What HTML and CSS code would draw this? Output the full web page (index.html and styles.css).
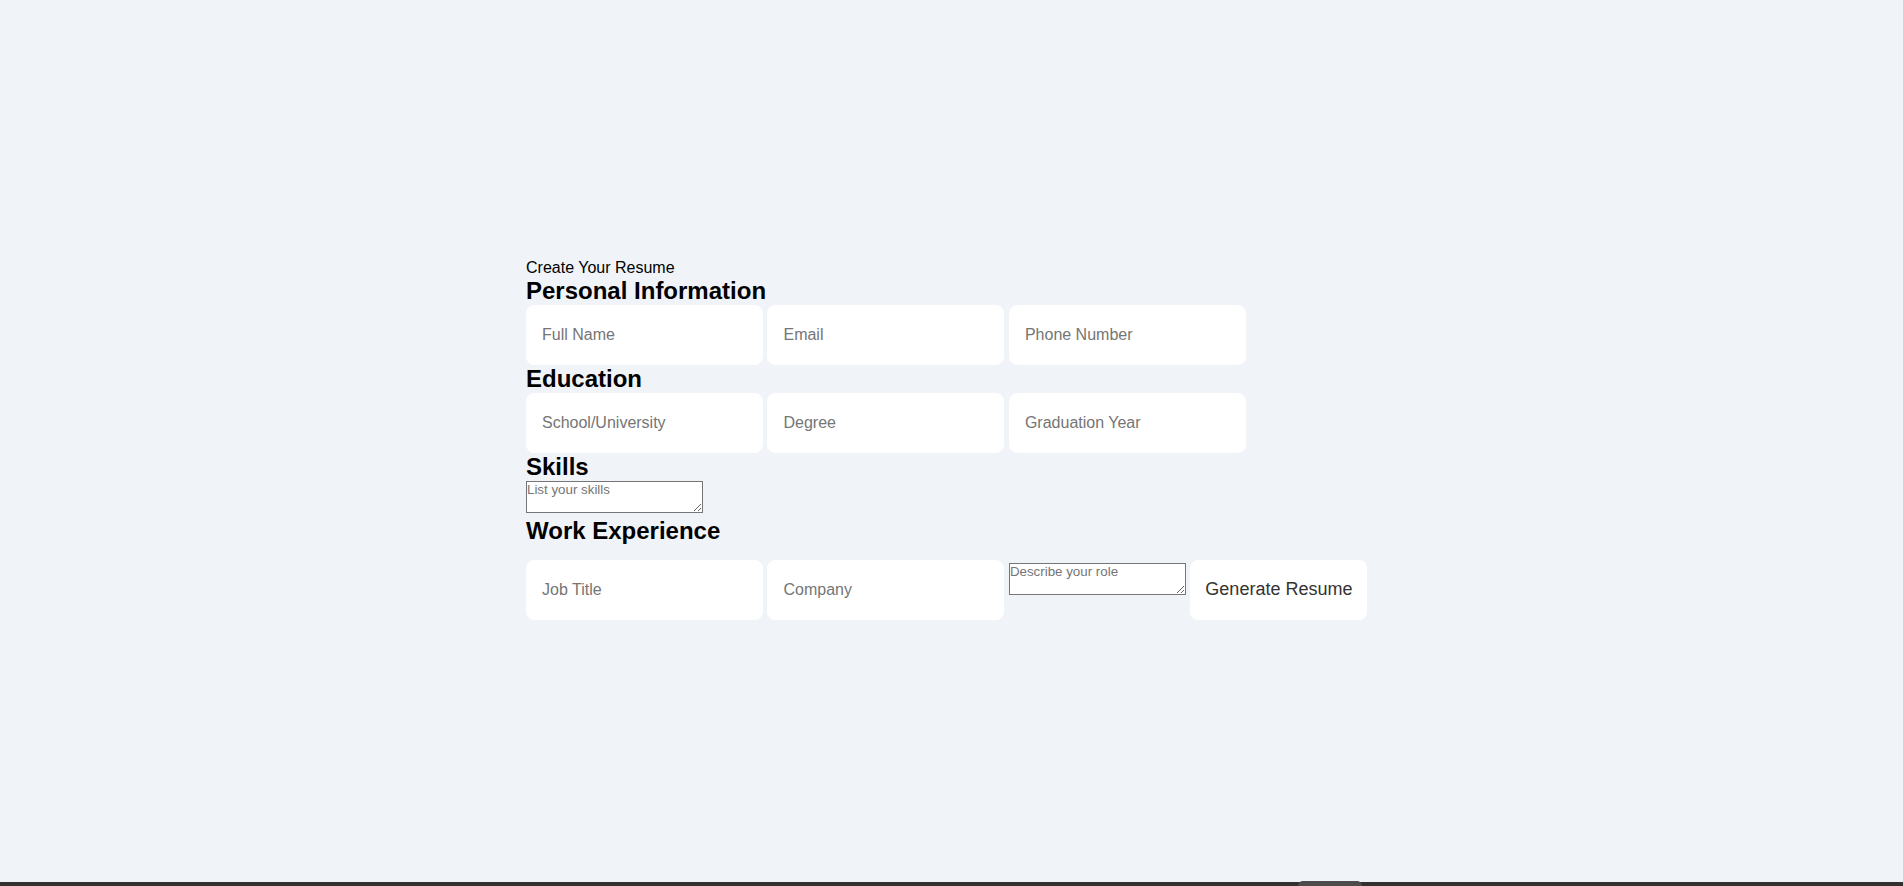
FILE: index.html
```html
<!DOCTYPE html>
<html lang="en">
<head>
<meta charset="utf-8">
<title>Resume Builder</title>
<link rel="stylesheet" href="styles.css">
</head>
<body>
<div class="page">
  <form class="resume-form">
    <div class="form-title">Create Your Resume</div>

    <h2 class="section-title">Personal Information</h2>
    <div class="field-row">
      <input class="field" type="text" placeholder="Full Name">
      <input class="field" type="email" placeholder="Email">
      <input class="field" type="tel" placeholder="Phone Number">
    </div>

    <h2 class="section-title">Education</h2>
    <div class="field-row">
      <input class="field" type="text" placeholder="School/University">
      <input class="field" type="text" placeholder="Degree">
      <input class="field" type="text" placeholder="Graduation Year">
    </div>

    <h2 class="section-title">Skills</h2>
    <div class="field-row">
      <textarea class="note" placeholder="List your skills"></textarea>
    </div>

    <h2 class="section-title section-title--spaced">Work Experience</h2>
    <div class="field-row">
      <input class="field" type="text" placeholder="Job Title">
      <input class="field" type="text" placeholder="Company">
      <textarea class="note" placeholder="Describe your role"></textarea>
      <button class="generate" type="button">Generate Resume</button>
    </div>
  </form>
</div>
<div class="bottom-bar"><span class="bottom-bar__thumb"></span></div>
</body>
</html>
```

FILE: styles.css
```css
* {
  margin: 0;
  padding: 0;
}

html,
body {
  background: #f0f4f8;
}

body {
  font-family: "Liberation Sans", Arial, sans-serif;
  font-size: 16px;
  color: #000;
}

.page {
  padding-top: 259px;
}

.resume-form {
  max-width: 851px;
  margin: 0 auto;
}

.form-title {
  font-size: 16px;
}

.section-title {
  font-size: 24px;
  font-weight: bold;
}

.section-title--spaced {
  margin-bottom: 14.5px;
}

.field {
  width: 237px;
  padding: 20px 15px;
  border: 1px solid #fff;
  border-radius: 8px;
  background: #fff;
  font-family: "Liberation Sans", Arial, sans-serif;
  font-size: 16px;
  color: #333;
  box-sizing: border-box;
  outline: none;
}

.field::placeholder {
  color: #757575;
}

.note {
  width: 177px;
  height: 32px;
  border: 1px solid #767676;
  background: #fff;
  font-family: "Liberation Sans", Arial, sans-serif;
  font-size: 13.333px;
  color: #000;
  box-sizing: border-box;
  resize: both;
}

.note::placeholder {
  color: #757575;
}

.generate {
  padding: 19px 15px 20px;
  border: none;
  border-radius: 8px;
  background: #fff;
  font-family: "Liberation Sans", Arial, sans-serif;
  font-size: 18px;
  color: #333;
  cursor: pointer;
}

.bottom-bar {
  position: fixed;
  left: 0;
  right: 0;
  bottom: 0;
  height: 4px;
  background: #323030;
}

.bottom-bar__thumb {
  position: absolute;
  left: 1298px;
  bottom: 0;
  width: 64px;
  height: 5px;
  border-radius: 7px 7px 0 0;
  background: #4d4b4b;
}
```
